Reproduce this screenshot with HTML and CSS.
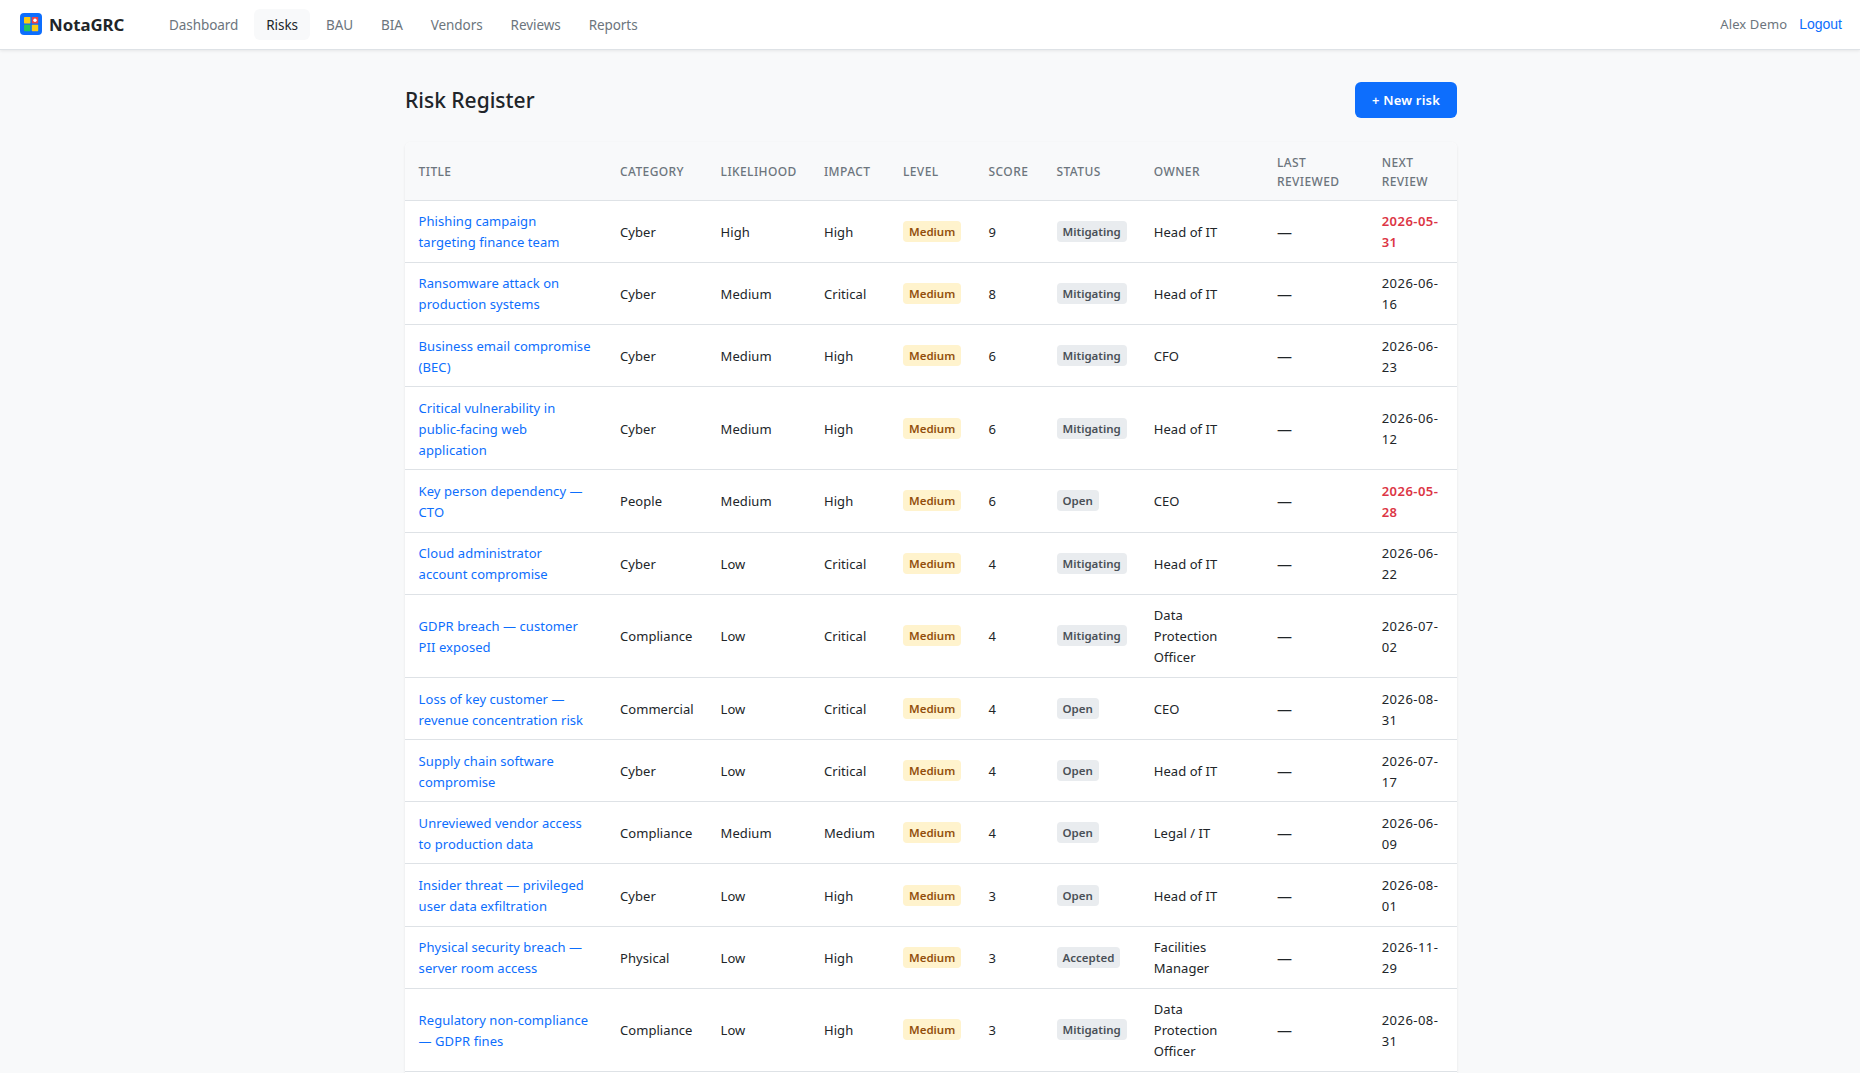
FILE: index.html
```html
<!DOCTYPE html>
<html lang="en">
<head>
    <meta charset="UTF-8">
    <title>Risk Register - NotaGRC</title>
    <link rel="stylesheet" href="styles.css">
</head>
<body>
    <nav class="navbar">
        <a class="brand" href="#">
            <svg class="brand-icon" viewBox="0 0 22 22" width="22" height="22">
                <rect width="22" height="22" rx="4" fill="#0d6efd"/>
                <rect x="4" y="4" width="6.4" height="6.4" rx="0.6" fill="#facc15"/>
                <rect x="11.8" y="4" width="6.4" height="6.4" rx="0.6" fill="#ef4444"/>
                <rect x="4" y="11.8" width="6.4" height="6.4" rx="0.6" fill="#22c55e"/>
                <rect x="11.8" y="11.8" width="6.4" height="6.4" rx="0.6" fill="#facc15"/>
                <circle cx="15" cy="7.2" r="1.7" fill="#fff"/>
            </svg>
            <span>NotaGRC</span>
        </a>
        <div class="nav-links">
            <a href="#">Dashboard</a>
            <a href="#" class="active">Risks</a>
            <a href="#">BAU</a>
            <a href="#">BIA</a>
            <a href="#">Vendors</a>
            <a href="#">Reviews</a>
            <a href="#">Reports</a>
        </div>
        <div class="nav-user">
            <span class="user-name">Alex Demo</span>
            <button class="logout">Logout</button>
        </div>
    </nav>

    <main class="container">
        <div class="page-header">
            <h1>Risk Register</h1>
            <a class="btn" href="#">+ New risk</a>
        </div>

        <div class="table-wrap">
            <table>
                <colgroup>
                    <col class="col-title">
                    <col class="col-category">
                    <col class="col-likelihood">
                    <col class="col-impact">
                    <col class="col-level">
                    <col class="col-score">
                    <col class="col-status">
                    <col class="col-owner">
                    <col class="col-last">
                    <col class="col-next">
                </colgroup>
                <thead>
                    <tr>
                        <th>Title</th>
                        <th>Category</th>
                        <th>Likelihood</th>
                        <th>Impact</th>
                        <th>Level</th>
                        <th>Score</th>
                        <th>Status</th>
                        <th>Owner</th>
                        <th>Last<br>reviewed</th>
                        <th>Next<br>review</th>
                    </tr>
                </thead>
                <tbody>
                    <tr>
                        <td><a href="#">Phishing campaign<br>targeting finance team</a></td>
                        <td>Cyber</td><td>High</td><td>High</td>
                        <td><span class="badge medium">Medium</span></td><td>9</td>
                        <td><span class="badge">Mitigating</span></td>
                        <td>Head of IT</td><td class="empty">—</td><td class="date overdue">2026-05-<br>31</td>
                    </tr>
                    <tr>
                        <td><a href="#">Ransomware attack on<br>production systems</a></td>
                        <td>Cyber</td><td>Medium</td><td>Critical</td>
                        <td><span class="badge medium">Medium</span></td><td>8</td>
                        <td><span class="badge">Mitigating</span></td>
                        <td>Head of IT</td><td class="empty">—</td><td class="date">2026-06-<br>16</td>
                    </tr>
                    <tr>
                        <td><a href="#">Business email compromise<br>(BEC)</a></td>
                        <td>Cyber</td><td>Medium</td><td>High</td>
                        <td><span class="badge medium">Medium</span></td><td>6</td>
                        <td><span class="badge">Mitigating</span></td>
                        <td>CFO</td><td class="empty">—</td><td class="date">2026-06-<br>23</td>
                    </tr>
                    <tr>
                        <td><a href="#">Critical vulnerability in<br>public-facing web<br>application</a></td>
                        <td>Cyber</td><td>Medium</td><td>High</td>
                        <td><span class="badge medium">Medium</span></td><td>6</td>
                        <td><span class="badge">Mitigating</span></td>
                        <td>Head of IT</td><td class="empty">—</td><td class="date">2026-06-<br>12</td>
                    </tr>
                    <tr>
                        <td><a href="#">Key person dependency —<br>CTO</a></td>
                        <td>People</td><td>Medium</td><td>High</td>
                        <td><span class="badge medium">Medium</span></td><td>6</td>
                        <td><span class="badge">Open</span></td>
                        <td>CEO</td><td class="empty">—</td><td class="date overdue">2026-05-<br>28</td>
                    </tr>
                    <tr>
                        <td><a href="#">Cloud administrator<br>account compromise</a></td>
                        <td>Cyber</td><td>Low</td><td>Critical</td>
                        <td><span class="badge medium">Medium</span></td><td>4</td>
                        <td><span class="badge">Mitigating</span></td>
                        <td>Head of IT</td><td class="empty">—</td><td class="date">2026-06-<br>22</td>
                    </tr>
                    <tr>
                        <td><a href="#">GDPR breach — customer<br>PII exposed</a></td>
                        <td>Compliance</td><td>Low</td><td>Critical</td>
                        <td><span class="badge medium">Medium</span></td><td>4</td>
                        <td><span class="badge">Mitigating</span></td>
                        <td>Data<br>Protection<br>Officer</td><td class="empty">—</td><td class="date">2026-07-<br>02</td>
                    </tr>
                    <tr>
                        <td><a href="#">Loss of key customer —<br>revenue concentration risk</a></td>
                        <td>Commercial</td><td>Low</td><td>Critical</td>
                        <td><span class="badge medium">Medium</span></td><td>4</td>
                        <td><span class="badge">Open</span></td>
                        <td>CEO</td><td class="empty">—</td><td class="date">2026-08-<br>31</td>
                    </tr>
                    <tr>
                        <td><a href="#">Supply chain software<br>compromise</a></td>
                        <td>Cyber</td><td>Low</td><td>Critical</td>
                        <td><span class="badge medium">Medium</span></td><td>4</td>
                        <td><span class="badge">Open</span></td>
                        <td>Head of IT</td><td class="empty">—</td><td class="date">2026-07-<br>17</td>
                    </tr>
                    <tr>
                        <td><a href="#">Unreviewed vendor access<br>to production data</a></td>
                        <td>Compliance</td><td>Medium</td><td>Medium</td>
                        <td><span class="badge medium">Medium</span></td><td>4</td>
                        <td><span class="badge">Open</span></td>
                        <td>Legal / IT</td><td class="empty">—</td><td class="date">2026-06-<br>09</td>
                    </tr>
                    <tr>
                        <td><a href="#">Insider threat — privileged<br>user data exfiltration</a></td>
                        <td>Cyber</td><td>Low</td><td>High</td>
                        <td><span class="badge medium">Medium</span></td><td>3</td>
                        <td><span class="badge">Open</span></td>
                        <td>Head of IT</td><td class="empty">—</td><td class="date">2026-08-<br>01</td>
                    </tr>
                    <tr>
                        <td><a href="#">Physical security breach —<br>server room access</a></td>
                        <td>Physical</td><td>Low</td><td>High</td>
                        <td><span class="badge medium">Medium</span></td><td>3</td>
                        <td><span class="badge">Accepted</span></td>
                        <td>Facilities<br>Manager</td><td class="empty">—</td><td class="date">2026-11-<br>29</td>
                    </tr>
                    <tr>
                        <td><a href="#">Regulatory non-compliance<br>— GDPR fines</a></td>
                        <td>Compliance</td><td>Low</td><td>High</td>
                        <td><span class="badge medium">Medium</span></td><td>3</td>
                        <td><span class="badge">Mitigating</span></td>
                        <td>Data<br>Protection<br>Officer</td><td class="empty">—</td><td class="date">2026-08-<br>31</td>
                    </tr>
                </tbody>
            </table>
        </div>
    </main>
</body>
</html>
```

FILE: styles.css
```css
* {
    box-sizing: border-box;
}

body {
    margin: 0;
    height: 100vh;
    overflow: hidden;
    display: flex;
    flex-direction: column;
    font-family: 'Segoe UI', 'Noto Sans', sans-serif;
    font-size: 13px;
    line-height: 21px;
    background: #f8f9fa;
    color: #212529;
}

a {
    color: #0d6efd;
    text-decoration: none;
}

.navbar {
    display: flex;
    align-items: center;
    flex: none;
    height: 50px;
    padding: 0 18px 1px 20px;
    background: #fff;
    border-bottom: 1px solid #dee2e6;
    box-shadow: 0 1px 3px rgba(0,0,0,0.08);
}

.brand {
    display: flex;
    align-items: center;
    gap: 7px;
    width: 137px;
    color: #212529;
    font-size: 16.8px;
    font-weight: 700;
}

.nav-links {
    display: flex;
    gap: 4px;
    flex: 1;
}

.nav-links a {
    padding: 6px 12px 4px;
    border-radius: 6px;
    color: #6c757d;
    font-size: 13.5px;
    letter-spacing: -0.07px;
}

.nav-links a.active {
    background: #f8f9fa;
    color: #212529;
}

.nav-user {
    display: flex;
    align-items: center;
    gap: 12px;
    color: #6c757d;
    font-size: 13px;
}

.user-name {
    padding-top: 1px;
    letter-spacing: 0.12px;
}

.logout {
    border: none;
    background: none;
    padding: 0;
    color: #0d6efd;
    font-family: 'Liberation Sans', Arial, sans-serif;
    font-size: 14px;
    cursor: pointer;
}

.container {
    display: flex;
    flex-direction: column;
    flex: 1;
    width: 1052px;
    margin: 32px auto 0;
    position: relative;
    left: 1px;
}

.page-header {
    display: flex;
    align-items: center;
    justify-content: space-between;
    margin-bottom: 24px;
}

h1 {
    margin: 0;
    font-size: 21px;
    font-weight: 500;
}

.btn {
    width: 102px;
    height: 36px;
    line-height: 36px;
    border-radius: 6px;
    background: #0d6efd;
    color: #fff;
    font-size: 13px;
    font-weight: 600;
    letter-spacing: 0.2px;
    text-align: center;
}

.table-wrap {
    flex: 1;
    background: #fff;
    border-radius: 6px 6px 0 0;
    box-shadow: 0 1px 3px rgba(0,0,0,0.08);
    overflow: hidden;
}

table {
    width: 100%;
    table-layout: fixed;
    border-collapse: collapse;
}

.col-title { width: 201.4px; }
.col-category { width: 100.6px; }
.col-likelihood { width: 103.4px; }
.col-impact { width: 79px; }
.col-level { width: 85.6px; }
.col-score { width: 68px; }
.col-status { width: 97.2px; }
.col-owner { width: 123.2px; }
.col-last { width: 104.8px; }
.col-next { width: 88.8px; }

th,
td {
    padding: 10.6px 13.6px 8.6px;
    border-bottom: 1px solid #dee2e6;
    text-align: left;
    vertical-align: middle;
    white-space: nowrap;
    letter-spacing: 0.06px;
}

th {
    background: #f8f9fa;
    color: #6c757d;
    font-size: 12px;
    font-weight: 500;
    line-height: 19.2px;
    letter-spacing: 0.4px;
    text-transform: uppercase;
}

.date {
    letter-spacing: 0.45px;
}

.empty {
    font-size: 15px;
}

.badge {
    display: inline-block;
    margin-bottom: 2px;
    padding: 0 6px;
    border-radius: 4px;
    background: #e9ecef;
    color: #495057;
    font-size: 11.5px;
    font-weight: 600;
    line-height: 21px;
    letter-spacing: 0;
    vertical-align: top;
}

.badge.medium {
    background: #fff3cd;
    color: #924f0c;
}

.overdue {
    color: #dc3545;
    font-weight: 600;
}
```
